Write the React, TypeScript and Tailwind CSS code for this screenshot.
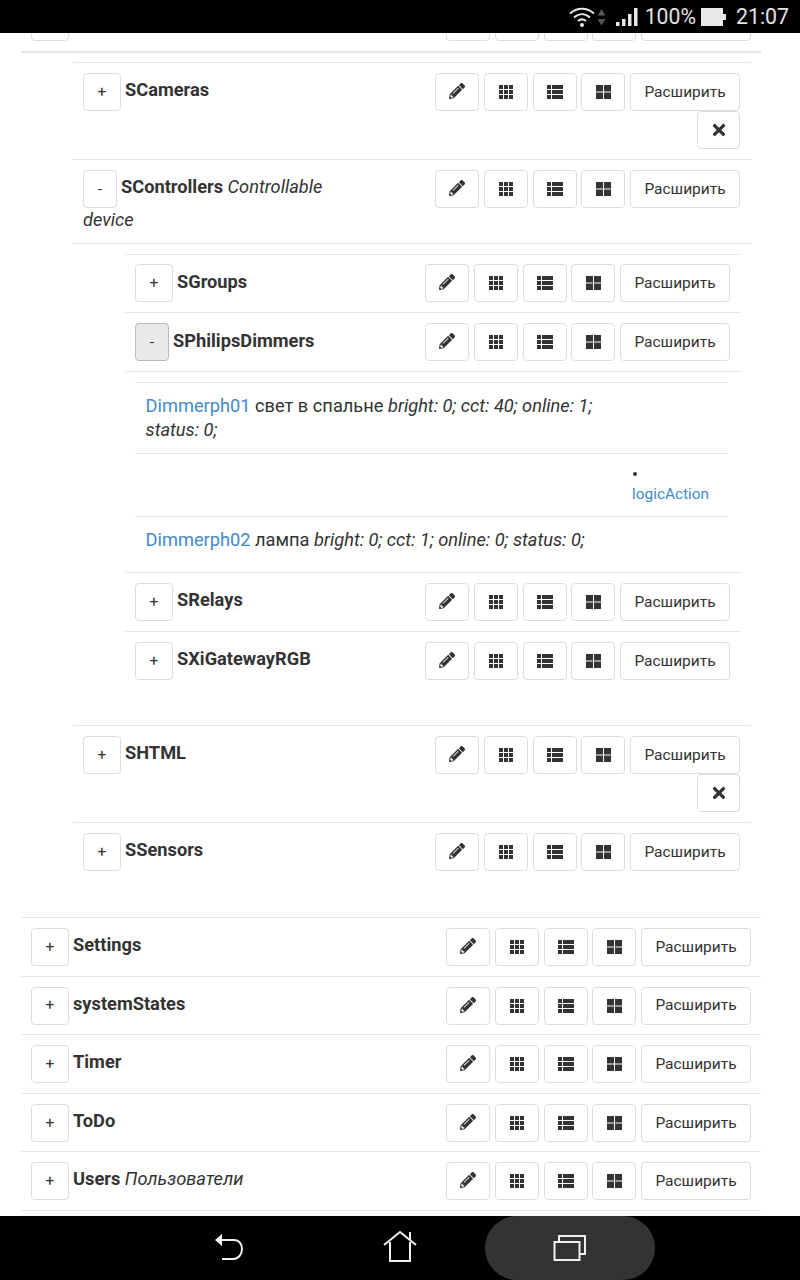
import React from "react";
import { FaPencilAlt, FaTimes } from "react-icons/fa";

const btn = "inline-flex items-center justify-center h-[38px] bg-white border border-[#dddddd] rounded-[4px] text-[#333333] text-[15.500px]";

function Th() {
  return (
    <svg width="14" height="14" viewBox="0 0 14 14" fill="#333333">
      {[0, 5, 10].map((y) => [0, 5, 10].map((x) => <rect key={`${x}-${y}`} x={x} y={y} width="4" height="4" />))}
    </svg>
  );
}

function ThList() {
  return (
    <svg width="16" height="14" viewBox="0 0 16 14" fill="#333333">
      {[0, 5, 10].map((y) => (
        <g key={y}>
          <rect x="0" y={y} width="4" height="4" />
          <rect x="5" y={y} width="11" height="4" />
        </g>
      ))}
    </svg>
  );
}

function ThLarge() {
  return (
    <svg width="15" height="14" viewBox="0 0 15 14" fill="#333333">
      <rect x="0" y="0" width="7" height="6.500" />
      <rect x="8" y="0" width="7" height="6.500" />
      <rect x="0" y="7.500" width="7" height="6.500" />
      <rect x="8" y="7.500" width="7" height="6.500" />
    </svg>
  );
}

function Tools({ close, inset }: { close?: boolean; inset?: boolean }) {
  return (
    <div className={`float-right flex flex-wrap justify-end gap-x-[4.750px] w-[306px] ${inset ? "mr-px" : ""}`}>
      <span className={`${btn} w-[44px]`}><FaPencilAlt className="text-[16px] -mt-[2px]" /></span>
      <span className={`${btn} w-[44px]`}><Th /></span>
      <span className={`${btn} w-[44px]`}><ThList /></span>
      <span className={`${btn} w-[44px]`}><ThLarge /></span>
      <span className={`${btn} w-[110px] pt-px`}>Расширить</span>
      {close && <span className={`${btn} w-[43px]`}><FaTimes className="text-[18px]" /></span>}
    </div>
  );
}

function Head({ sign = "+", active, name, note, note2, close, inset, low }: { sign?: string; active?: boolean; name: string; note?: string; note2?: string; close?: boolean; inset?: boolean; low?: boolean }) {
  return (
    <>
      <Tools close={close} inset={inset} />
      <span className={`${btn} float-left mr-[4px] pt-px ${sign === "+" ? "w-[38px]" : "w-[34px]"} ${active ? "!bg-[#e9e9e9] !border-[#bbbbbb]" : ""}`}>{sign}</span>
      <div className={`leading-[32px] ${low ? "pt-[2px]" : "pt-px"}`}>
        <b className="font-bold">{name}</b>
        {note && <i> {note}</i>}
      </div>
      {note2 && <div className="clear-left leading-[24px]"><i>{note2}</i></div>}
    </>
  );
}

function Row({ children, className = "" }: { children: React.ReactNode; className?: string }) {
  return <div className={`flow-root border-t border-[#e6e6e6] p-[10px] ${className}`}>{children}</div>;
}

export default function App() {
  return (
    <div className="w-[800px] h-[1280px] flex flex-col bg-white text-[#333333] text-[18.240px] font-['Roboto',sans-serif] overflow-hidden">
      <div className="h-[33px] bg-black text-[#e4e4e4] flex items-center justify-end shrink-0 pr-[11px]">
        <svg width="26" height="22" viewBox="0 0 26 22" fill="none" stroke="#e8e8e8" strokeWidth="2" className="mr-[2px]">
          <path d="M1 7.500C8 1 18 1 25 7.500M5 11.500C10 7 16 7 21 11.500M9 15C11.500 13 14.500 13 17 15" />
          <circle cx="13" cy="19" r="2" fill="#e8e8e8" stroke="none" />
        </svg>
        <svg width="9" height="20" viewBox="0 0 9 20" fill="#555555" className="mr-[9px]">
          <path d="M4.500 2L8.500 8.500H.5zM.5 12H8.500L4.500 18.500z" />
        </svg>
        <svg width="24" height="20" viewBox="0 0 24 20" fill="#e8e8e8" className="mr-[6px]">
          <rect x="1" y="15" width="3.500" height="4" /><rect x="7" y="12" width="3.500" height="7" /><rect x="13" y="7" width="3.500" height="12" /><rect x="19" y="1" width="3.500" height="18" />
        </svg>
        <span className="text-[21.200px] mr-[5px]">100%</span>
        <span className="w-[22px] h-[18px] bg-[#e8e8e8]" />
        <span className="w-[3px] h-[6px] bg-[#e8e8e8] mr-[10px]" />
        <span className="text-[21.300px]">21:07</span>
      </div>

      <div className="flex-1 min-h-0 overflow-hidden">
        <div className="mx-[21px] w-[740px] -mt-[33px]">
          <div className="flow-root p-[10px] pt-0 mt-[3px]">
            <Head name="" />
          </div>
          <div className="border-t-2 border-[#e6e6e6] px-[10px] pt-[9px] pb-[10px] flow-root h-[866px]">
            <div className="ml-[42px]">
              <Row><Head name="SCameras" close inset /></Row>
              <Row className="!pb-[11px]"><Head sign="-" name="SControllers" note="Controllable" note2="device" inset /></Row>
              <div className="border-t border-[#e6e6e6] pt-[10px] px-[10px]">
                <div className="ml-[42px] mr-px">
                  <Row className="!pt-[9px]"><Head name="SGroups" low /></Row>
                  <Row><Head sign="-" active name="SPhilipsDimmers" low /></Row>
                  <div className="border-t border-[#e6e6e6] pt-[10px] pb-[10px] pl-[10px] pr-[12px]">
                    <div className="border-t border-[#e6e6e6] pl-[10.500px] pt-[11px] pb-[11px] pr-[100px] leading-[24px]">
                      <a className="text-[#428bca]">Dimmerph01</a> свет в спальне <i>bright: 0; cct: 40; online: 1; status: 0;</i>
                    </div>
                    <div className="border-t border-[#e6e6e6] h-[63px] text-[15.400px] flow-root">
                      <div className="float-right mr-[19px] w-[77px] leading-[21px] pt-[10px]">
                        <div className="h-[20px] flex items-center"><span className="w-[4px] h-[4px] rounded-full bg-[#333333] ml-px" /></div>
                        <a className="text-[#428bca]">logicAction</a>
                      </div>
                    </div>
                    <div className="border-t border-[#e6e6e6] pl-[10.500px] pt-[11px] pb-[10px] leading-[24px]">
                      <a className="text-[#428bca]">Dimmerph02</a> лампа <i>bright: 0; cct: 1; online: 0; status: 0;</i>
                    </div>
                  </div>
                  <Row><Head name="SRelays" /></Row>
                  <Row className="!pb-[45px]"><Head name="SXiGatewayRGB" /></Row>
                </div>
              </div>
              <Row><Head name="SHTML" close inset /></Row>
              <Row><Head name="SSensors" inset /></Row>
            </div>
          </div>
          <Row className="h-[58.600px]"><Head name="Settings" /></Row>
          <Row className="h-[58.600px]"><Head name="systemStates" /></Row>
          <Row className="h-[58.600px]"><Head name="Timer" /></Row>
          <Row className="h-[58.600px]"><Head name="ToDo" /></Row>
          <Row className="h-[58.600px]"><Head name="Users" note="Пользователи" /></Row>
          <div className="border-t border-[#e6e6e6]" />
        </div>
      </div>

      <div className="h-[64px] bg-black shrink-0 flex items-center relative">
        <svg width="34" height="32" viewBox="0 0 34 32" fill="none" stroke="#f0f0f0" strokeWidth="2" className="ml-[214px]">
          <path d="M6 8H20C25 8 28 12 28 17C28 23 24 27 19 27H8" />
          <path d="M1 8L8 2V14z" fill="#f0f0f0" stroke="none" />
        </svg>
        <svg width="34" height="34" viewBox="0 0 34 34" fill="none" stroke="#f0f0f0" strokeWidth="2" className="ml-[135px] mt-[-3px]">
          <path d="M1 15L17 2L33 15M27 10V2M7 12V31H27V12" />
        </svg>
        <div className="ml-[68px] w-[170px] h-[64px] rounded-[32px] bg-[#333333] flex items-center justify-center">
          <svg width="34" height="30" viewBox="0 0 34 30" fill="none" stroke="#f0f0f0" strokeWidth="2">
            <rect x="1.500" y="9" width="25" height="18" />
            <path d="M6 9V3H32V21H27" />
          </svg>
        </div>
      </div>
    </div>
  );
}
